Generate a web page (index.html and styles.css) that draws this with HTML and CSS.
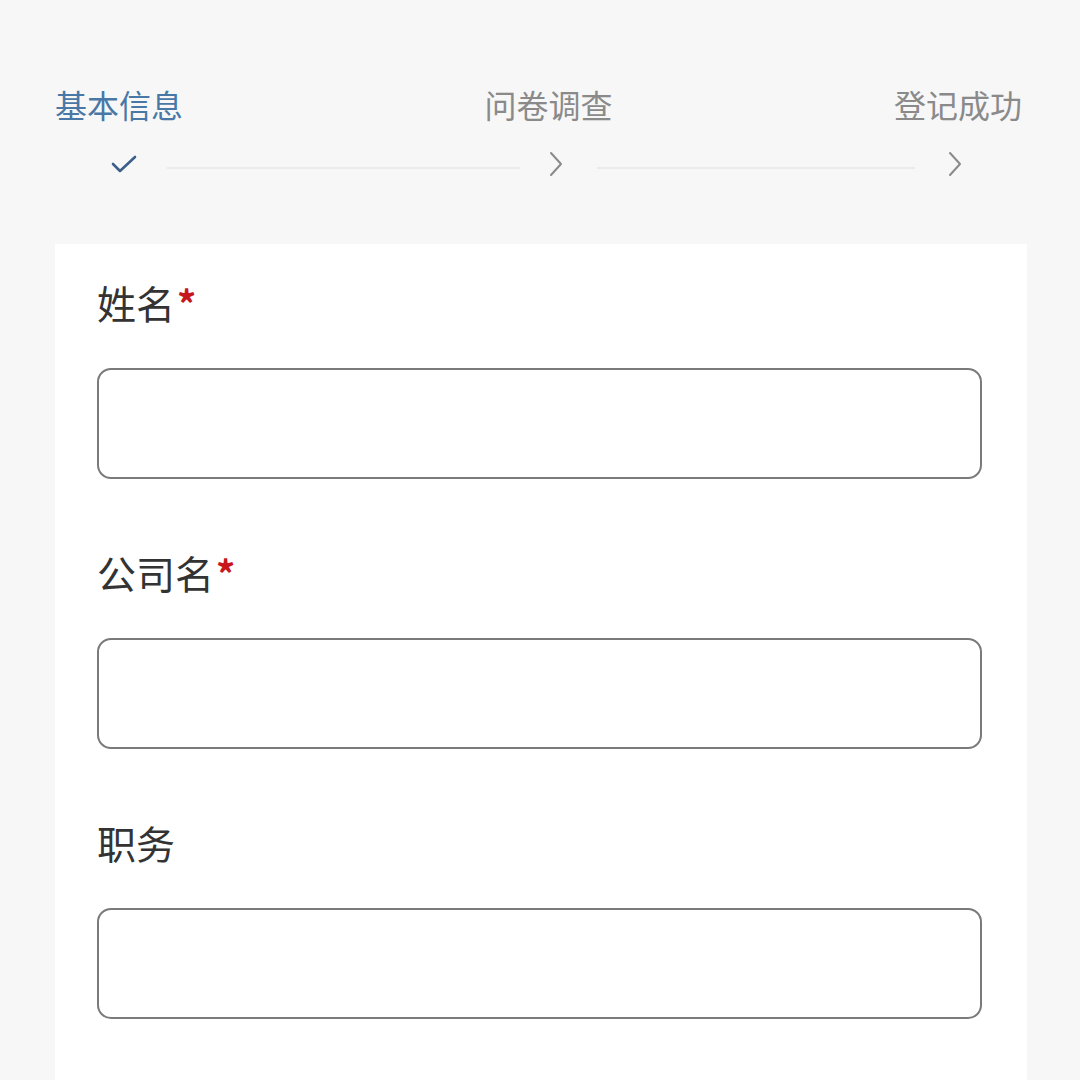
FILE: index.html
```html
<!DOCTYPE html>
<html lang="zh">
<head>
    <meta charset="UTF-8">
    <meta name="viewport" content="width=device-width, initial-scale=1.0">
    <title>登记</title>
    <link rel="stylesheet" href="styles.css">
</head>
<body>

    <!-- 步骤条 -->
    <div class="steps">
        <div class="step-labels">
            <span class="step-label active">基本信息</span>
            <span class="step-label middle">问卷调查</span>
            <span class="step-label">登记成功</span>
        </div>
        <div class="step-icons">
            <svg class="icon check" width="28" height="22" viewBox="0 0 28 22">
                <path d="M3 11 L10 18 L25 4" fill="none" stroke="#3b5f8a" stroke-width="2.6" stroke-linecap="round" stroke-linejoin="round"/>
            </svg>
            <div class="step-line first"></div>
            <svg class="icon arrow" width="16" height="28" viewBox="0 0 16 28">
                <path d="M3 3 L13 14 L3 25" fill="none" stroke="#8a8a8a" stroke-width="2" stroke-linecap="round" stroke-linejoin="round"/>
            </svg>
            <div class="step-line second"></div>
            <svg class="icon arrow" width="16" height="28" viewBox="0 0 16 28">
                <path d="M3 3 L13 14 L3 25" fill="none" stroke="#8a8a8a" stroke-width="2" stroke-linecap="round" stroke-linejoin="round"/>
            </svg>
        </div>
    </div>

    <!-- 表单 -->
    <div class="card">
        <form>
            <div class="field">
                <label>姓名<span class="required">*</span></label>
                <input type="text">
            </div>
            <div class="field">
                <label>公司名<span class="required">*</span></label>
                <input type="text">
            </div>
            <div class="field">
                <label>职务</label>
                <input type="text">
            </div>
        </form>
    </div>

</body>
</html>
```

FILE: styles.css
```css
:root {
    --color-azul: #4a78a6;
    --color-gris: #8a8a8a;
    --color-texto: #333333;
}

body {
    font-family: "Noto Sans CJK SC", "Noto Sans", sans-serif;
    background-color: #f7f7f7;
    margin: 0;
    padding: 0;
    height: 1080px;
    overflow: hidden;
}

.steps {
    padding: 84px 58px 0 55px;
}

.step-labels {
    display: flex;
    justify-content: space-between;
}

.step-label {
    font-size: 32px;
    line-height: 40px;
    color: var(--color-gris);
}

.step-label.active {
    color: var(--color-azul);
}

.step-label.middle {
    margin-left: 20px;
}

.step-icons {
    display: flex;
    align-items: center;
    height: 40px;
    margin-top: 20px;
    padding-left: 55px;
    padding-right: 59px;
}

.icon {
    display: block;
    flex: none;
}

.step-line {
    flex-basis: 0;
    height: 2px;
    background-color: #ebebeb;
    margin-top: 8px;
}

.step-line.first {
    flex-grow: 353;
    margin-left: 29px;
    margin-right: 28px;
}

.step-line.second {
    flex-grow: 318;
    margin-left: 33px;
    margin-right: 32px;
}

.card {
    background-color: white;
    margin: 60px 53px 0 55px;
    padding: 33px 45px 61px 42px;
}

.field {
    display: flex;
    flex-direction: column;
    margin-bottom: 68px;
}

.field:last-child {
    margin-bottom: 0;
}

.field label {
    font-size: 39px;
    line-height: 50px;
    color: var(--color-texto);
}

.required {
    color: #c8161d;
    font-size: 38px;
    font-weight: bold;
    line-height: 1;
    margin-left: 2px;
}

.field input {
    margin-top: 41px;
    height: 111px;
    box-sizing: border-box;
    border: 2px solid #7a7a7a;
    border-radius: 14px;
    background-color: white;
    font-size: 32px;
    padding: 0 20px;
}
```
